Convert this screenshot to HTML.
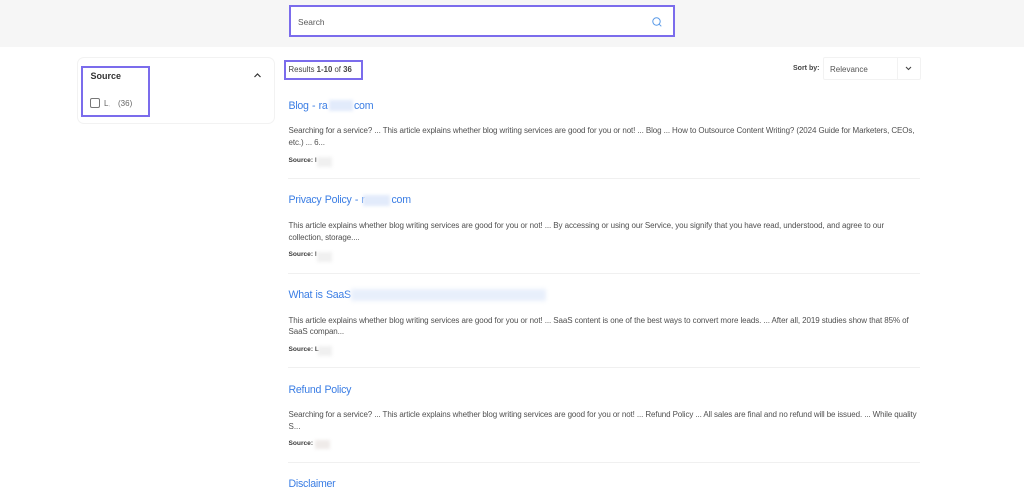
<!DOCTYPE html>
<html lang="en">
<head>
<meta charset="utf-8">
<title>Search results</title>
<style>
html,body{margin:0;padding:0;background:#fff}
body{width:1024px;height:492px;position:relative;overflow:hidden;font-family:"Liberation Sans",sans-serif;color:#4a4a4a}
#w{position:absolute;left:0;top:0;width:1024px;height:492px;filter:blur(.3px)}
.a{position:absolute;white-space:nowrap}
.head{left:0;top:0;width:1024px;height:47px;background:#f6f6f6}
.search{left:289px;top:5px;width:382px;height:28px;background:#fff;border:2.5px solid #7b6cec}
.card{left:77px;top:57px;width:198px;height:67px;border:1px solid #f2f2f2;border-radius:7px;box-sizing:border-box}
.box{border:2px solid #7b6cec;box-sizing:border-box}
.t{font-size:10.6px;line-height:14px;color:#3a7de4;letter-spacing:-.25px;word-spacing:.6px;left:288.5px}
.d{font-size:8px;line-height:11px;color:#505050;left:288.5px}
.s{font-size:6.6px;line-height:10px;color:#3a3a3a;left:288.5px;font-weight:bold}
.hr{left:288px;width:632px;height:1px;background:#f0f0f0}
.blur{background:#e2ebfb;filter:blur(1.5px)}
.gray{background:#f0f0f0;filter:blur(1.5px)}
</style>
</head>
<body>
<div id="w">
<div class="a head"></div>
<div class="a search"></div>
<div class="a" style="left:298px;top:16px;font-size:8.4px;line-height:12px;color:#5a5a5a">Search</div>
<svg class="a" style="left:651px;top:15.5px" width="12" height="12" viewBox="0 0 12 12" fill="none" stroke="#5b9be8" stroke-width="1"><circle cx="5.5" cy="5.5" r="3.7"/><path d="M8.2 8.2L10.3 10.3"/></svg>

<div class="a card"></div>
<div class="a box" style="left:81px;top:66px;width:69px;height:51px"></div>
<div class="a" style="left:90.5px;top:70px;font-size:9px;line-height:12px;font-weight:bold;color:#333">Source</div>
<svg class="a" style="left:252px;top:71px" width="11" height="9" viewBox="0 0 11 9" fill="none" stroke="#333" stroke-width="1.2"><path d="M2.5 6L5.5 3L8.5 6"/></svg>
<div class="a" style="left:90px;top:98px;width:10px;height:10px;border:1px solid #777;border-radius:2px;box-sizing:border-box"></div>
<div class="a" style="left:104px;top:97.5px;font-size:8px;line-height:12px;color:#666">L<span style="color:#ddd">,</span></div>
<div class="a" style="left:118px;top:97.5px;font-size:8px;line-height:12px;color:#666">(36)</div>

<div class="a box" style="left:284px;top:60px;width:79px;height:20px"></div>
<div class="a" style="left:288.5px;top:63.5px;font-size:7.8px;line-height:11px;color:#444">Results <b>1-10</b> of <b>36</b></div>
<div class="a" style="left:793px;top:63px;font-size:7px;line-height:11px;font-weight:bold;color:#444">Sort by:</div>
<div class="a" style="left:823px;top:57px;width:98px;height:23px;border:1px solid #f2f2f2;border-radius:2px;box-sizing:border-box"></div>
<div class="a" style="left:897px;top:57px;width:1px;height:23px;background:#f2f2f2"></div>
<div class="a" style="left:830px;top:63.5px;font-size:8px;line-height:11px;color:#555">Relevance</div>
<svg class="a" style="left:904px;top:64.5px" width="9" height="7" viewBox="0 0 9 7" fill="none" stroke="#444" stroke-width="1.1"><path d="M2 2L4.5 4.5L7 2"/></svg>

<div class="a t" style="top:98.5px">Blog - ra</div>
<div class="a blur" style="left:329px;top:100px;width:24px;height:11px"></div>
<div class="a t" style="left:354px;top:98.5px">com</div>
<div class="a d" style="top:125px;letter-spacing:-.105px">Searching for a service? ... This article explains whether blog writing services are good for you or not! ... Blog ... How to Outsource Content Writing? (2024 Guide for Marketers, CEOs,</div>
<div class="a d" style="top:136.5px;letter-spacing:-.1px">etc.) ... 6...</div>
<div class="a s" style="top:155.5px">Source: l</div>
<div class="a gray" style="left:317px;top:157px;width:15px;height:10px"></div>
<div class="a hr" style="top:178px"></div>

<div class="a t" style="top:193px">Privacy Policy - r</div>
<div class="a blur" style="left:363px;top:195px;width:27px;height:11px"></div>
<div class="a t" style="left:391.5px;top:193px">com</div>
<div class="a d" style="top:220px;letter-spacing:-.085px">This article explains whether blog writing services are good for you or not! ... By accessing or using our Service, you signify that you have read, understood, and agree to our</div>
<div class="a d" style="top:231.5px;letter-spacing:-.1px">collection, storage....</div>
<div class="a s" style="top:250px">Source: l</div>
<div class="a gray" style="left:317px;top:252px;width:15px;height:10px"></div>
<div class="a hr" style="top:272.5px"></div>

<div class="a t" style="top:288px">What is SaaS</div>
<div class="a blur" style="left:351px;top:289px;width:195px;height:12px;background:#e8effb;filter:blur(2px)"></div>
<div class="a d" style="top:314.5px;letter-spacing:-.085px">This article explains whether blog writing services are good for you or not! ... SaaS content is one of the best ways to convert more leads. ... After all, 2019 studies show that 85% of</div>
<div class="a d" style="top:326px;letter-spacing:-.1px">SaaS compan...</div>
<div class="a s" style="top:344.5px">Source: L</div>
<div class="a gray" style="left:318px;top:346px;width:14px;height:10px"></div>
<div class="a hr" style="top:367px"></div>

<div class="a t" style="top:382.5px">Refund Policy</div>
<div class="a d" style="top:409px;letter-spacing:-.11px">Searching for a service? ... This article explains whether blog writing services are good for you or not! ... Refund Policy ... All sales are final and no refund will be issued. ... While quality</div>
<div class="a d" style="top:420.5px">S...</div>
<div class="a s" style="top:439px">Source:</div>
<div class="a gray" style="left:315px;top:440px;width:15px;height:9px;background:#efebe9"></div>
<div class="a hr" style="top:462px"></div>

<div class="a t" style="top:477px">Disclaimer</div>
</div>
</body>
</html>
